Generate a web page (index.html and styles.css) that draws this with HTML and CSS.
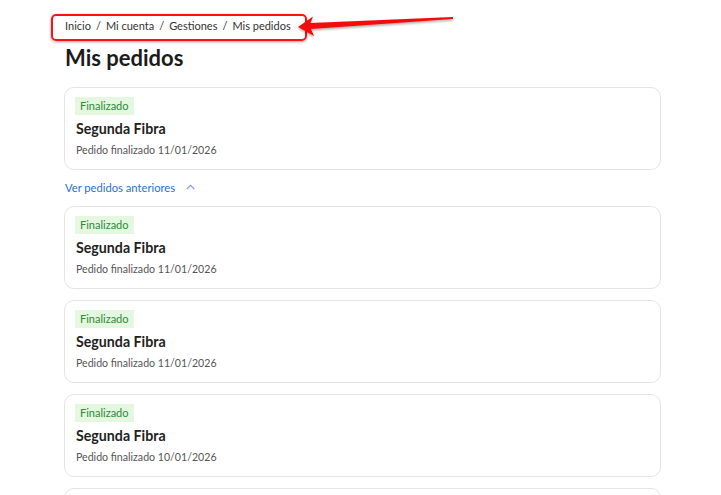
FILE: index.html
```html
<!DOCTYPE html>
<html lang="es">
<head>
<meta charset="utf-8">
<title>Mis pedidos</title>
<link rel="stylesheet" href="styles.css">
</head>
<body>
<main class="page">
  <nav class="breadcrumb">
    <span>Inicio</span><span class="sep">/</span><span>Mi cuenta</span><span class="sep">/</span><span>Gestiones</span><span class="sep">/</span><span>Mis pedidos</span>
  </nav>
  <h1 class="title">Mis pedidos</h1>

  <div class="orders">
    <article class="card">
      <span class="badge">Finalizado</span>
      <h2 class="card-title">Segunda Fibra</h2>
      <p class="card-sub">Pedido finalizado 11/01/2026</p>
    </article>
  </div>

  <a class="more">Ver pedidos anteriores
    <svg class="chev" width="9" height="6" viewBox="0 0 9 6"><path d="M0.8 5 L4.5 1.3 L8.2 5" fill="none" stroke="#7aa0e6" stroke-width="1.1"/></svg>
  </a>

  <div class="orders">
    <article class="card">
      <span class="badge">Finalizado</span>
      <h2 class="card-title">Segunda Fibra</h2>
      <p class="card-sub">Pedido finalizado 11/01/2026</p>
    </article>
    <article class="card">
      <span class="badge">Finalizado</span>
      <h2 class="card-title">Segunda Fibra</h2>
      <p class="card-sub">Pedido finalizado 11/01/2026</p>
    </article>
    <article class="card">
      <span class="badge">Finalizado</span>
      <h2 class="card-title">Segunda Fibra</h2>
      <p class="card-sub">Pedido finalizado 10/01/2026</p>
    </article>
    <article class="card card-cut"></article>
  </div>
</main>

<div class="highlight"></div>
<svg class="arrow" width="180" height="30" viewBox="0 0 180 30">
  <defs>
    <filter id="sh" x="-10%" y="-50%" width="120%" height="200%">
      <feDropShadow dx="0" dy="1.5" stdDeviation="1" flood-color="#000" flood-opacity="0.35"/>
    </filter>
  </defs>
  <path d="M3 16 L18 5.5 L15.5 12 L158 6 L158 8 L16 18 L19 25 Z" fill="#f20d0d" filter="url(#sh)"/>
</svg>
</body>
</html>
```
FILE: styles.css
```css
* { box-sizing: border-box; }
html, body { margin: 0; padding: 0; background: #fff; }
body {
  font-family: Lato, "Noto Sans", sans-serif;
  color: #222;
  width: 721px;
  height: 495px;
  overflow: hidden;
  position: relative;
}
.page {
  padding: 18px 0 0 64px;
  width: 661px;
}
.breadcrumb {
  display: flex;
  font-size: 11px;
  color: #333;
  height: 16px;
  line-height: 16px;
  padding-left: 1px;
}
.breadcrumb .sep { margin: 0 5px; }
.title {
  margin: 11px 0 0 1px;
  font-size: 22px;
  line-height: 26px;
  font-weight: 700;
  color: #1b1b1b;
}
.orders {
  display: flex;
  flex-direction: column;
  gap: 11px;
}
.title + .orders { margin-top: 16px; }
.card {
  border: 1px solid #e4e4e4;
  border-radius: 10px;
  padding: 9px 10px 10px;
  height: 83px;
  display: flex;
  flex-direction: column;
  align-items: flex-start;
  flex-shrink: 0;
}
.badge {
  background: #e4f7df;
  color: #2f8a3a;
  font-size: 11px;
  line-height: 18px;
  height: 18px;
  padding: 0 5px;
}
.card-title {
  margin: 4px 0 0 1px;
  font-size: 14.2px;
  line-height: 20px;
  font-weight: 700;
  color: #222;
}
.card-sub {
  margin: 3px 0 0 1px;
  font-size: 10.6px;
  line-height: 16px;
  color: #555;
}
.more {
  display: flex;
  align-items: center;
  gap: 11px;
  height: 16px;
  margin: 10px 0 10px 1px;
  font-size: 11.2px;
  line-height: 16px;
  color: #2b6fd6;
}
.chev { margin-top: -2px; }
.highlight {
  position: absolute;
  left: 51px;
  top: 14px;
  width: 256px;
  height: 27px;
  border: 2px solid #f11;
  border-radius: 5px;
  box-shadow: 0 1px 3px rgba(0,0,0,0.35);
}
.arrow {
  position: absolute;
  left: 295px;
  top: 11px;
}
```
